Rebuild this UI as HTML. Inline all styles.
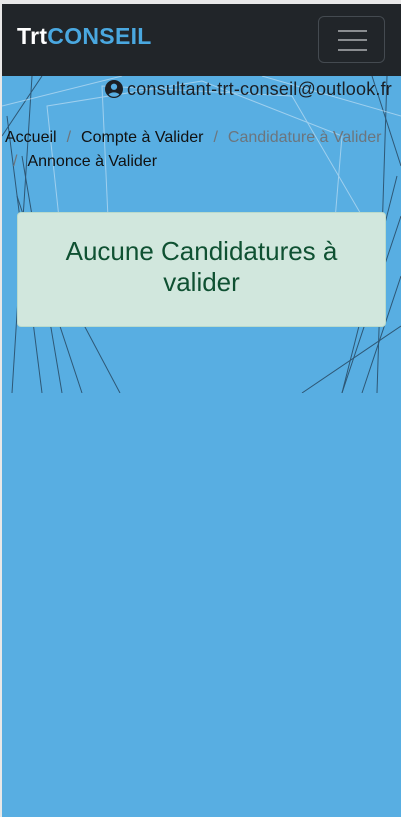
<!DOCTYPE html>
<html><head><meta charset="utf-8"><style>
html,body{margin:0;padding:0;width:401px;height:817px;overflow:hidden;background:#e8e8e8;font-family:"Liberation Sans",sans-serif}
.page{position:absolute;left:2px;top:4px;width:399px;height:813px;background:#58aee2}
.nav{position:absolute;left:0;top:0;width:399px;height:72px;background:#212529}
.brand{position:absolute;left:15px;top:19px;font-size:23px;font-weight:bold;color:#fff;letter-spacing:0.3px}
.brand span{color:#4aa8e0}
.tog{position:absolute;left:316px;top:12px;width:67px;height:47px;border:1px solid #444a50;border-radius:6px;box-sizing:border-box}
.tog i{position:absolute;left:19px;width:29px;height:2px;background:#8a8d90}
svg.bg{position:absolute;left:0;top:72px}
.user{position:absolute;right:9px;top:75px;font-size:18px;letter-spacing:0.2px;color:#1b1f24;white-space:nowrap}
.user svg{vertical-align:-3px;margin-right:4px}
.bc{position:absolute;left:3px;top:122px;font-size:16px;letter-spacing:0;color:#111;line-height:24px;width:398px;white-space:nowrap}
.bc .s{color:#6c757d;margin:0 10px}
.bc .a{color:#6c757d}
.alert{position:absolute;left:15px;top:208px;width:369px;height:115px;background:#d1e7dd;border:1px solid #badbcc;border-radius:4px;box-sizing:border-box;text-align:center;color:#0f5132;font-size:26px;line-height:31px;padding-top:23px}
</style></head><body>
<div class="page">
<svg class="bg" width="399" height="317" stroke-width="1" fill="none">
<g stroke="#1d3347" opacity=".7">
<line x1="0" y1="60" x2="40" y2="0"/><line x1="10" y1="317" x2="30" y2="0"/><line x1="40" y1="317" x2="5" y2="40"/>
<line x1="80" y1="317" x2="15" y2="120"/><line x1="118" y1="317" x2="40" y2="170"/><line x1="60" y1="317" x2="20" y2="80"/>
<line x1="340" y1="317" x2="399" y2="140"/><line x1="360" y1="317" x2="399" y2="200"/><line x1="300" y1="317" x2="399" y2="250"/>
<line x1="370" y1="0" x2="399" y2="90"/><line x1="385" y1="0" x2="375" y2="317"/><line x1="395" y1="100" x2="340" y2="317"/>
</g>
<g stroke="#cfe6f6" opacity=".6">
<polygon points="45,30 200,5 340,60 330,180 150,250 60,170"/>
<polygon points="100,10 290,20 360,140 250,240 110,230"/>
<line x1="0" y1="30" x2="120" y2="0"/><line x1="260" y1="0" x2="399" y2="40"/>
</g>
</svg>
<div class="nav">
<div class="brand">Trt<span>CONSEIL</span></div>
<div class="tog"><i style="top:13px"></i><i style="top:22px"></i><i style="top:32px"></i></div>
</div>
<div class="user"><svg width="18" height="18" viewBox="0 0 16 16"><circle cx="8" cy="8" r="8" fill="#1b1f24"/><circle cx="8" cy="6" r="2.8" fill="#58aee2"/><path d="M3.2 13a5.5 4 0 0 1 9.6 0A7 7 0 0 1 3.2 13z" fill="#58aee2"/></svg>consultant-trt-conseil@outlook.fr</div>
<div class="bc">Accueil<span class="s">/</span>Compte à Valider<span class="s">/</span><span class="a">Candidature à Valider</span><br><span class="s" style="margin-left:8px;margin-right:10px">/</span>Annonce à Valider</div>
<div class="alert">Aucune Candidatures à<br>valider</div>
</div>
</body></html>
